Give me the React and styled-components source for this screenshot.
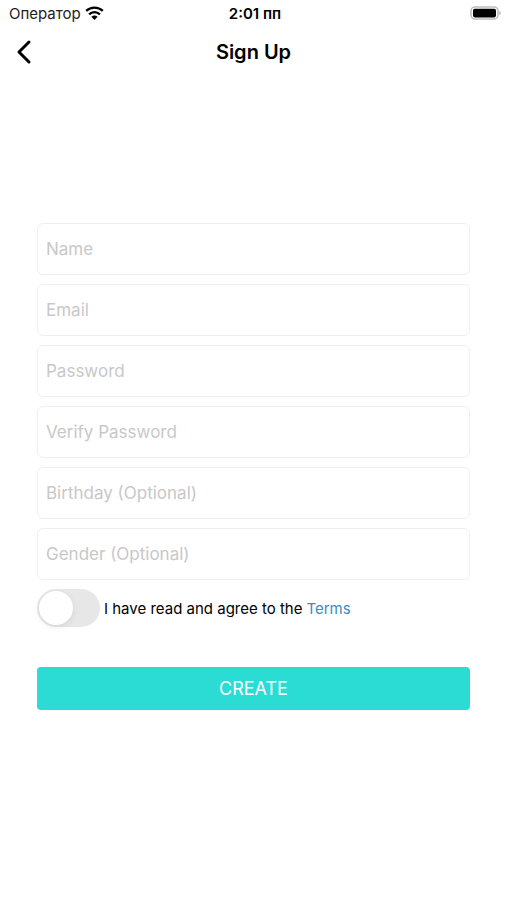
import { useState } from "react";
import styled, { createGlobalStyle } from "styled-components";

const GlobalStyle = createGlobalStyle`
  * {
    box-sizing: border-box;
  }

  body {
    margin: 0;
    background: #fff;
    color: #000;
    font-family: Inter, "Liberation Sans", sans-serif;
  }
`;

const Screen = styled.div`
  min-height: 100vh;
  display: flex;
  flex-direction: column;
`;

const StatusBar = styled.div`
  display: grid;
  grid-template-columns: 1fr auto 1fr;
  align-items: center;
  height: 27px;
  padding: 0 6px 0 9px;
  font-size: 15px;

  .carrier {
    display: flex;
    align-items: center;
    gap: 4px;
    color: #222;
  }

  .wifi {
    margin-bottom: 2px;
  }

  .time {
    font-weight: 600;
  }

  .battery {
    justify-self: end;
    display: flex;
  }
`;

const Header = styled.header`
  display: grid;
  grid-template-columns: 1fr auto 1fr;
  align-items: center;
  height: 50px;
  padding: 0 12px;

  h1 {
    margin: 0;
    font-size: 20px;
    font-weight: 600;
  }
`;

const BackButton = styled.button`
  display: flex;
  justify-self: start;
  padding: 0;
  border: 0;
  background: none;
  cursor: pointer;
`;

const Form = styled.form`
  display: flex;
  flex-direction: column;
  gap: 9px;
  margin-top: 146px;
  padding: 0 37px;
`;

const Field = styled.input`
  width: 100%;
  height: 52px;
  padding: 0 8px;
  border: 1px solid #efefef;
  border-radius: 6px;
  background: #fff;
  font-family: inherit;
  font-size: 17px;

  &::placeholder {
    color: #c8c8c8;
    opacity: 1;
  }
`;

const Agreement = styled.div`
  display: flex;
  align-items: center;
  gap: 4px;
  font-size: 15px;

  a {
    color: #3c8ac8;
    text-decoration: none;
  }
`;

const Switch = styled.input`
  appearance: none;
  flex: none;
  width: 63px;
  height: 38px;
  margin: 0;
  padding: 2px;
  border-radius: 19px;
  background: #e7e7e8;
  cursor: pointer;

  &::before {
    content: "";
    display: block;
    width: 34px;
    height: 34px;
    border-radius: 50%;
    background: #fff;
    box-shadow: 0 2px 6px rgba(0, 0, 0, 0.08);
    transition: margin 0.2s ease;
  }

  &:checked {
    background: #2adcd3;
  }

  &:checked::before {
    margin-left: 25px;
  }
`;

const CreateButton = styled.button`
  height: 43px;
  margin-top: 31px;
  border: 0;
  border-radius: 4px;
  background: #2adcd3;
  color: #fff;
  font-family: inherit;
  font-size: 18px;
  cursor: pointer;
`;

const WifiIcon = () => (
  <svg className="wifi" width="19" height="14" viewBox="0 0 19 14" aria-hidden="true">
    <path
      d="M1.2 4.9C5.8 .5 13.2 .5 17.8 4.9M4.1 8.3c3-2.9 7.8-2.9 10.8 0"
      fill="none"
      stroke="#000"
      strokeWidth="2.3"
    />
    <path d="M9.5 14 6.4 10.8q3.1-2.5 6.2 0Z" />
  </svg>
);

const BatteryIcon = () => (
  <svg width="31" height="15" viewBox="0 0 31 15" aria-hidden="true">
    <rect x="1" y="1" width="27" height="12" rx="4" fill="none" stroke="#bdbdbd" strokeWidth="1.6" />
    <rect x="3" y="2.8" width="23" height="8.6" rx="1.8" />
    <path d="M29.3 5q1.5.7 1.5 2t-1.5 2Z" fill="#b0b0b0" />
  </svg>
);

const fields = [
  { name: "name", label: "Name", type: "text" },
  { name: "email", label: "Email", type: "email" },
  { name: "password", label: "Password", type: "password" },
  { name: "verify", label: "Verify Password", type: "password" },
  { name: "birthday", label: "Birthday (Optional)", type: "text" },
  { name: "gender", label: "Gender (Optional)", type: "text" },
];

const App = () => {
  const [agreed, setAgreed] = useState(false);

  return (
    <Screen>
      <GlobalStyle />
      <StatusBar>
        <div className="carrier">
          <span>Оператор</span>
          <WifiIcon />
        </div>
        <span className="time">2:01 пп</span>
        <div className="battery">
          <BatteryIcon />
        </div>
      </StatusBar>

      <Header>
        <BackButton type="button" aria-label="Back">
          <svg width="24" height="26" viewBox="0 0 24 26" aria-hidden="true">
            <path d="M17 3 7 13l10 10" fill="none" stroke="#000" strokeWidth="3" strokeLinecap="round" strokeLinejoin="round" />
          </svg>
        </BackButton>
        <h1>Sign Up</h1>
      </Header>

      <Form onSubmit={(e) => e.preventDefault()}>
        {fields.map(({ name, label, type }) => (
          <Field key={name} name={name} type={type} placeholder={label} aria-label={label} />
        ))}

        <Agreement>
          <Switch
            id="agree"
            type="checkbox"
            role="switch"
            checked={agreed}
            onChange={(e) => setAgreed(e.target.checked)}
          />
          <label htmlFor="agree">I have read and agree to the</label>
          <a href="#terms">Terms</a>
        </Agreement>

        <CreateButton type="submit">CREATE</CreateButton>
      </Form>
    </Screen>
  );
};

export default App;
